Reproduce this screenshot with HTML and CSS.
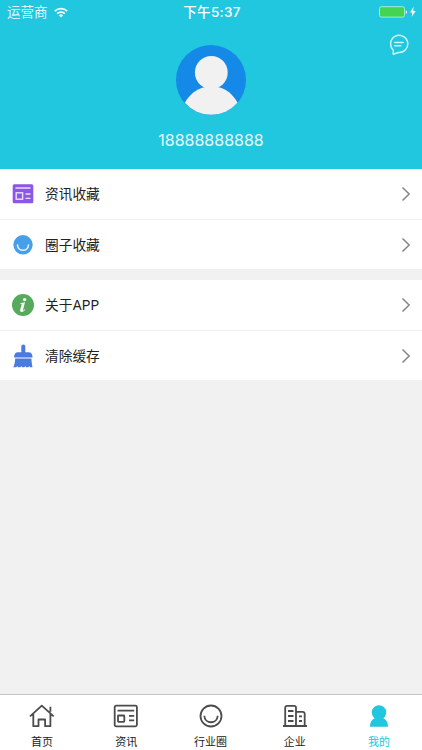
FILE: index.html
```html
<!DOCTYPE html>
<html lang="zh-CN">
  <head>
    <meta charset="utf-8">
    <meta name="viewport" content="width=device-width, initial-scale=1">
    <title>我的</title>
    <link rel="stylesheet" href="styles.css">
  </head>
  <body>
    <header class="header">
      <div class="status-bar">
        <div class="carrier">
          <span>运营商</span>
          <svg class="wifi" width="14" height="11" viewBox="0 0 14 11" fill="none" stroke="#fff" stroke-width="1.8">
            <path d="M.8 4.1a8.8 8.8 0 0 1 12.4 0" />
            <path d="M3.2 6.6a5.4 5.4 0 0 1 7.6 0" />
            <path d="M7 10.6 4.9 8.4a3 3 0 0 1 4.2 0z" fill="#fff" stroke="none" />
          </svg>
        </div>
        <div class="time">下午5:37</div>
        <div class="battery">
          <svg width="38" height="12" viewBox="0 0 38 12">
            <rect x=".5" y=".7" width="25" height="10.4" rx="1.8" fill="#43d551" stroke="#a5e9dc" />
            <path d="M26.8 4.2c1.6.4 1.6 3.2 0 3.6z" fill="#fff" />
            <path d="M34.6.8 31.1 6.4h2.4l-1 4.6 4.2-6h-2.6z" fill="#fff" />
          </svg>
        </div>
      </div>

      <div class="profile">
        <svg class="avatar" width="70" height="70" viewBox="0 0 70 70">
          <circle cx="35" cy="35" r="35" fill="#1489e8" />
          <path d="M8.8 57.8C13.4 49.5 20.5 44 28.4 42.2h14.2C50.5 44 57.2 49.5 61.5 57.8A35 35 0 0 1 8.8 57.8z" fill="#f1f1f1" />
          <ellipse cx="35.3" cy="27.5" rx="16.4" ry="16.5" fill="#f1f1f1" />
        </svg>
        <p class="phone">18888888888</p>
      </div>

      <a class="message" href="#">
        <svg width="20" height="22" viewBox="0 0 20 22" fill="none" stroke="#d2f7fa" stroke-width="1.5" stroke-linecap="round" stroke-linejoin="round">
          <path d="M4.3 16.200A8.600 8.600 0 1 1 9.500 18.500L4.300 20.200z" />
          <path d="M5.800 8.500h8.400M5.800 11.700h6" />
        </svg>
      </a>
    </header>

    <main class="content">
      <ul class="menu">
        <li class="menu-item">
          <svg class="menu-icon" width="22" height="22" viewBox="0 0 22 22">
            <rect x=".7" y="1.200" width="20.600" height="19" rx="1.500" fill="#8c56e8" />
            <path d="M3.500 5h15M13.500 11h5M13.500 15.300h5" stroke="#eadfff" stroke-width="1.300" />
            <rect x="4.200" y="9.800" width="6.400" height="6.400" fill="none" stroke="#eadfff" stroke-width="1.400" />
          </svg>
          <span class="menu-label">资讯收藏</span>
          <svg class="arrow" width="10" height="16" viewBox="0 0 10 16"><path d="m1.500 1.500 6.600 6.500-6.600 6.500" /></svg>
        </li>
        <li class="menu-item">
          <svg class="menu-icon" width="22" height="22" viewBox="0 0 22 22">
            <circle cx="11" cy="10.800" r="9.700" fill="#479fe9" />
            <path d="M5.500 11c.5 7 10.500 7 11 0" fill="none" stroke="#e3f3ff" stroke-width="1.600" stroke-linecap="round" />
          </svg>
          <span class="menu-label">圈子收藏</span>
          <svg class="arrow" width="10" height="16" viewBox="0 0 10 16"><path d="m1.500 1.500 6.600 6.500-6.600 6.500" /></svg>
        </li>
      </ul>

      <ul class="menu">
        <li class="menu-item">
          <svg class="menu-icon" width="22" height="22" viewBox="0 0 22 22">
            <circle cx="11" cy="11" r="11" fill="#57a95c" />
            <circle cx="12.600" cy="5.600" r="1.700" fill="#fff" />
            <path d="M8.500 9.100c1.700-.2 3.100-.5 4.500-.9l-2 7.900c-.1.500.2.500.5.300l1.300-1.200.5.400c-1.100 1.700-2.400 2.500-3.700 2.400-1.200-.1-1.700-1-1.400-2.200l1.500-5.600c0-.4-.3-.5-1.300-.5z" fill="#fff" />
          </svg>
          <span class="menu-label">关于APP</span>
          <svg class="arrow" width="10" height="16" viewBox="0 0 10 16"><path d="m1.500 1.500 6.600 6.500-6.600 6.500" /></svg>
        </li>
        <li class="menu-item">
          <svg class="menu-icon" width="22" height="24" viewBox="0 0 22 24" fill="#4b7be0">
            <path d="M9.300 8.300V2.500a2 2 0 0 1 4 0v5.800h3.400c2.400 0 3.700 1.500 3.900 5.100H2c.2-3.600 1.500-5.100 3.900-5.100z" />
            <path d="M3.200 14.400h16.200c.1 3 .5 5.600 1.100 8.800H18l-.8-1.100-.8 1.100H14l-.8-1.100-.8 1.100H10l-.8-1.100-.8 1.100H6l-.8-1.100-.8 1.100H1.300c1.200-2.700 1.700-5.300 1.900-8.800z" />
          </svg>
          <span class="menu-label">清除缓存</span>
          <svg class="arrow" width="10" height="16" viewBox="0 0 10 16"><path d="m1.500 1.500 6.600 6.500-6.600 6.500" /></svg>
        </li>
      </ul>
    </main>

    <nav class="tab-bar">
      <a class="tab" href="#">
        <svg class="tab-icon" width="26" height="24" viewBox="0 0 26 24">
          <path d="M1 12.300 12.800 1.700l11.900 10.600M4.300 10v12.200h5.200v-6.700h6.600v6.700h5.300V10M21.400 2.800v5" />
        </svg>
        <span>首页</span>
      </a>
      <a class="tab" href="#">
        <svg class="tab-icon" width="26" height="24" viewBox="0 0 26 24">
          <rect x="1.700" y="1.700" width="22.200" height="20.600" rx="1.500" />
          <path d="M4.500 6.700h16.700M16 11.800h5.200M16 16.400h5.200" />
          <rect x="5" y="11.500" width="6.300" height="6.300" rx=".5" />
        </svg>
        <span>资讯</span>
      </a>
      <a class="tab" href="#">
        <svg class="tab-icon" width="26" height="24" viewBox="0 0 26 24">
          <circle cx="13" cy="12" r="10.500" />
          <path d="M6.300 11.700c.4 8.700 13 8.700 13.400 0" />
        </svg>
        <span>行业圈</span>
      </a>
      <a class="tab" href="#">
        <svg class="tab-icon" width="26" height="24" viewBox="0 0 26 24">
          <path d="M1 22h24M3.200 22V3.700c0-1.200.7-1.900 1.900-1.900h7c1.200 0 1.900.7 1.900 1.900V22M14 7.900h6.700c1.200 0 2 .8 2 2V22" />
          <path d="M6 7h5.500M6 12h5.500M6 17h5.500M17 12.300h3M17 17h3" />
        </svg>
        <span>企业</span>
      </a>
      <a class="tab active" href="#">
        <svg class="tab-icon" width="26" height="24" viewBox="0 0 26 24">
          <path d="M13 1.200a7.200 7.200 0 0 1 7.200 7.200c0 2.500-1.200 4.500-2.900 5.900 3 1.200 4.700 4.300 4.700 8.400H4c0-4.100 1.700-7.200 4.700-8.400-1.700-1.400-2.900-3.400-2.900-5.900A7.200 7.200 0 0 1 13 1.200z" />
        </svg>
        <span>我的</span>
      </a>
    </nav>
  </body>
</html>
```
FILE: styles.css
```css
*,
*::before,
*::after {
  margin: 0;
  padding: 0;
  box-sizing: border-box;
}

body {
  display: flex;
  flex-direction: column;
  height: 100vh;
  font-family: Inter, "Noto Sans CJK SC", sans-serif;
  color: #222;
  background-color: #f1f1f1;
}

svg {
  display: block;
}

a {
  color: inherit;
  text-decoration: none;
}

.header {
  position: relative;
  flex: none;
  height: 169px;
  color: #fff;
  background-color: #21c6df;
}

.status-bar {
  display: grid;
  grid-template-columns: 1fr auto 1fr;
  align-items: center;
  height: 24px;
  padding: 0 5px 0 7px;
  font-size: 13.5px;
  line-height: 24px;
}

.carrier {
  display: flex;
  align-items: center;
  gap: 6px;
  color: #dcf8fb;
}

.time {
  font-weight: 500;
  letter-spacing: 0.3px;
}

.battery {
  justify-self: end;
}

.profile {
  display: flex;
  flex-direction: column;
  align-items: center;
  padding-top: 21px;
}

.phone {
  margin-top: 14px;
  font-size: 16px;
  line-height: 22px;
  color: #e5fafc;
}

/* sits over the top right corner of the header */
.message {
  position: absolute;
  top: 34px;
  right: 13px;
}

.content {
  flex: 1;
}

.menu {
  margin-bottom: 11px;
  list-style: none;
  background-color: #fff;
}

.menu-item {
  display: flex;
  align-items: center;
  height: 50px;
  padding: 0 11px 0 11.5px;
}

.menu-item + .menu-item {
  border-top: 1px solid #f1f1f1;
}

.menu-label {
  flex: 1;
  margin-left: 11.5px;
  font-size: 13.7px;
  line-height: 20px;
}

.arrow {
  fill: none;
  stroke: #858585;
  stroke-width: 1.5;
}

.tab-bar {
  display: flex;
  flex: none;
  height: 56px;
  padding-right: 1px;
  border-top: 1px solid #c4c4c4;
  background-color: #fff;
}

.tab {
  display: flex;
  flex: 1;
  flex-direction: column;
  align-items: center;
  padding-top: 9px;
  font-size: 11px;
  line-height: 16px;
}

.tab span {
  margin-top: 6px;
}

.tab-icon {
  fill: none;
  stroke: #4c4c4c;
  stroke-width: 1.8;
  stroke-linejoin: round;
}

.active {
  color: #21c6df;
}

.active .tab-icon {
  fill: #21c6df;
  stroke: none;
}
```
